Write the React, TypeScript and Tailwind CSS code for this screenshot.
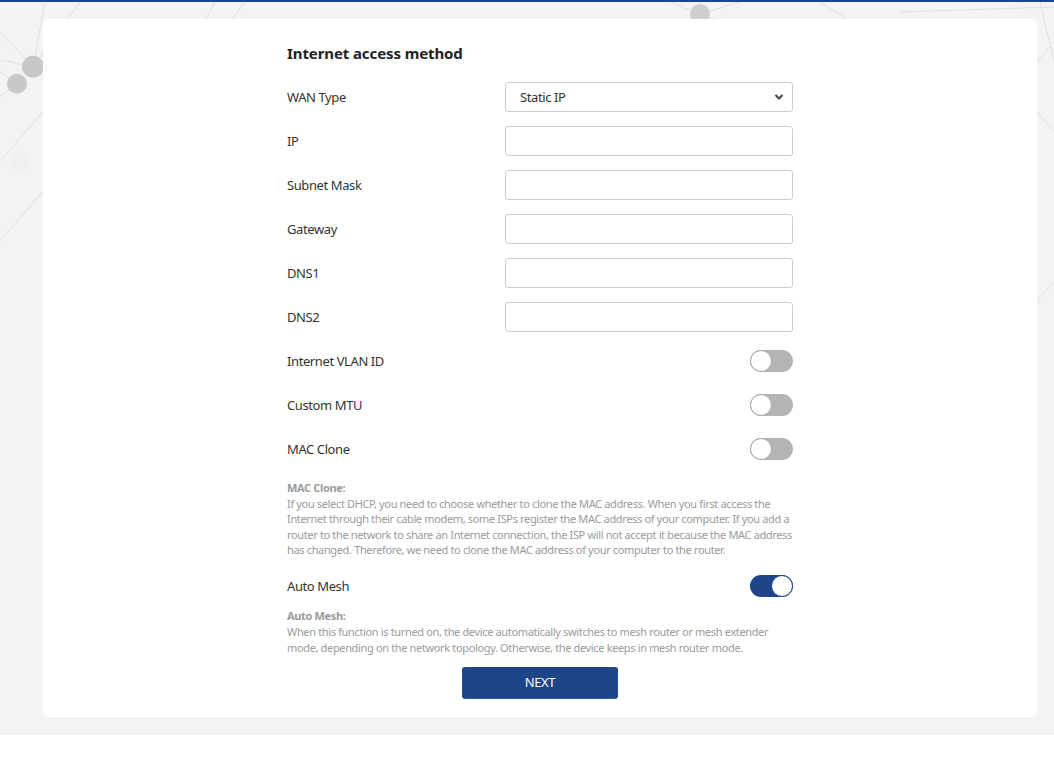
import React from "react";

const font = { fontFamily: '"Noto Sans", "Open Sans", Arial, sans-serif' };

function Toggle({ on }: { on?: boolean }) {
  return on ? (
    <div className="relative h-[22px] w-[43px] rounded-full bg-[#1e4489]">
      <div className="absolute right-0 top-0 h-[22px] w-[22px] rounded-full border border-[#1e4489] bg-white" />
    </div>
  ) : (
    <div className="relative h-[22px] w-[43px] rounded-full bg-[#b4b4b4]">
      <div className="absolute left-0 top-0 h-[22px] w-[22px] rounded-full border border-[#a8a8a8] bg-white" />
    </div>
  );
}

function Row({ label, children }: { label: string; children: React.ReactNode }) {
  return (
    <div className="flex h-[44px] items-center justify-between">
      <span className="pt-[2px] text-[13px] tracking-[-0.4px] text-[#333]">{label}</span>
      {children}
    </div>
  );
}

function Input() {
  return <input className="h-[30px] w-[288px] rounded-[3px] border border-[#cccccc] bg-white px-3 text-[13px] outline-none" />;
}

function Background() {
  return (
    <svg className="absolute inset-0 h-full w-full" viewBox="0 0 1054 735" preserveAspectRatio="none">
      <g stroke="#e0e0e0" strokeWidth="1" fill="none">
        <line x1="33" y1="65" x2="45" y2="0" />
        <line x1="33" y1="65" x2="0" y2="30" />
        <line x1="33" y1="65" x2="80" y2="0" />
        <line x1="17" y1="82" x2="0" y2="95" />
        <line x1="33" y1="65" x2="0" y2="58" />
        <line x1="17" y1="82" x2="0" y2="70" />
        <line x1="0" y1="160" x2="43" y2="110" />
        <line x1="0" y1="240" x2="43" y2="190" />
        <line x1="700" y1="12" x2="670" y2="0" />
        <line x1="700" y1="12" x2="740" y2="0" />
        <line x1="700" y1="12" x2="720" y2="19" />
        <line x1="215" y1="0" x2="205" y2="19" />
        <line x1="245" y1="0" x2="230" y2="19" />
        <line x1="820" y1="0" x2="850" y2="19" />
        <line x1="900" y1="10" x2="1054" y2="5" />
        <line x1="1040" y1="0" x2="1054" y2="60" />
        <line x1="1037" y1="60" x2="1054" y2="40" />
        <line x1="1037" y1="110" x2="1054" y2="130" />
        <line x1="1037" y1="300" x2="1054" y2="280" />
      </g>
      <circle cx="33" cy="65" r="11" fill="#c8c8c8" />
      <circle cx="17" cy="82" r="10" fill="#c8c8c8" />
      <circle cx="700" cy="12" r="10" fill="#cfcfcf" />
      <circle cx="20" cy="160" r="10" fill="#efefef" />
    </svg>
  );
}

export default function App() {
  return (
    <div className="w-[1054px] bg-white" style={font}>
      <div className="h-[2px] bg-[#1e4489]" />
      <div className="relative bg-[#f3f3f3] pb-[18px] pl-[43px] pr-[17px] pt-[17px]">
        <Background />
        <div className="relative rounded-[5px] bg-white pb-[19px] pt-[22px]">
          <div className="mx-auto w-[506px]">
            <h1 className="pt-[1px] text-[15px] font-bold leading-[22px] tracking-[-0.1px] text-[#222]">Internet access method</h1>
            <div className="mt-[11px]">
              <Row label="WAN Type">
                <div className="relative h-[30px] w-[288px] rounded-[3px] border border-[#cccccc] bg-white">
                  <span className="absolute left-[14px] top-[5px] text-[13px] tracking-[-0.4px] text-[#333]">Static IP</span>
                  <svg className="absolute right-[8px] top-[10px]" width="10" height="8" viewBox="0 0 10 8">
                    <path d="M1.5 2 L5 5.5 L8.5 2" stroke="#444" strokeWidth="2" fill="none" />
                  </svg>
                </div>
              </Row>
              <Row label="IP"><Input /></Row>
              <Row label="Subnet Mask"><Input /></Row>
              <Row label="Gateway"><Input /></Row>
              <Row label="DNS1"><Input /></Row>
              <Row label="DNS2"><Input /></Row>
              <Row label="Internet VLAN ID"><Toggle /></Row>
              <Row label="Custom MTU"><Toggle /></Row>
              <Row label="MAC Clone"><Toggle /></Row>
            </div>
            <div className="mt-[9px] whitespace-nowrap text-[11px] leading-[15.5px] tracking-[-0.35px] text-[#9a9a9a]">
              <div className="font-bold">MAC Clone:</div>
              <p>
                If you select DHCP, you need to choose whether to clone the MAC address. When you first access the
                <br />
                Internet through their cable modem, some ISPs register the MAC address of your computer. If you add a
                <br />
                router to the network to share an Internet connection, the ISP will not accept it because the MAC address
                <br />
                has changed. Therefore, we need to clone the MAC address of your computer to the router.
              </p>
            </div>
            <div className="mt-[6px]">
              <Row label="Auto Mesh"><Toggle on /></Row>
            </div>
            <div className="whitespace-nowrap text-[11px] leading-[16px] tracking-[-0.35px] text-[#9a9a9a]">
              <div className="font-bold">Auto Mesh:</div>
              <p>
                When this function is turned on, the device automatically switches to mesh router or mesh extender
                <br />
                mode, depending on the network topology. Otherwise, the device keeps in mesh router mode.
              </p>
            </div>
            <div className="mt-[11px] flex justify-center">
              <button className="h-[31px] w-[156px] rounded-[3px] bg-[#1e4489] pt-[1px] text-[13px] tracking-[-0.4px] text-white shadow-[0_1px_0_#2a5a9a]">
                NEXT
              </button>
            </div>
          </div>
        </div>
      </div>
    </div>
  );
}
